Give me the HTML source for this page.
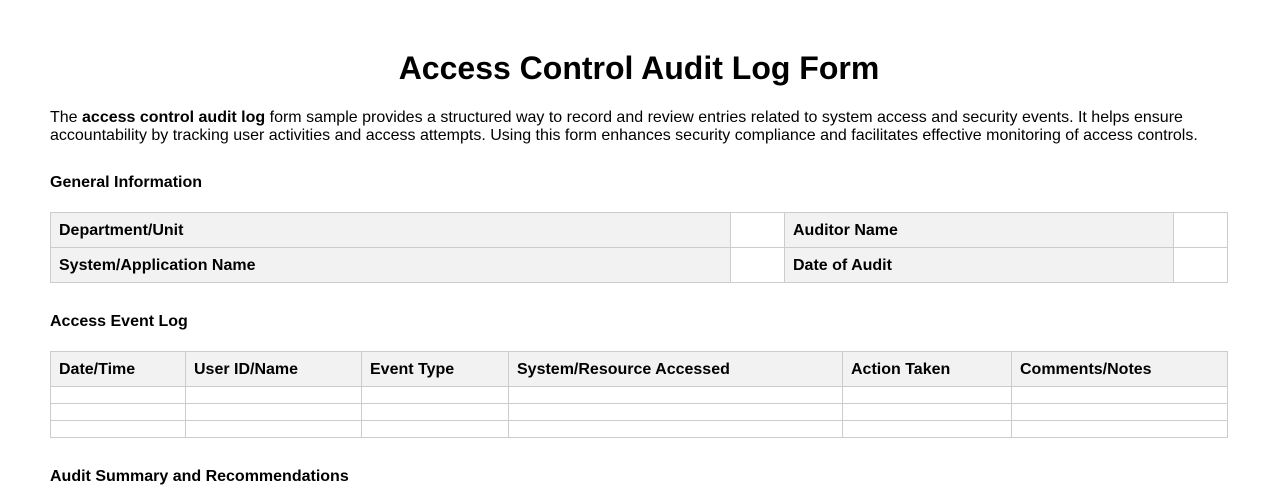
<!DOCTYPE html>
<html><head><meta charset="utf-8"><style>
body{margin:0;width:1278px;height:501px;overflow:hidden;background:#fff;font-family:"Liberation Sans",Arial,sans-serif;color:#000}
h1{position:absolute;top:49px;left:0;width:1278px;text-align:center;font-size:32px;margin:0;font-weight:bold;line-height:38px}
p{position:absolute;top:109px;left:50px;width:1180px;margin:0;font-size:16px;line-height:18px}
h3{position:absolute;left:50px;margin:0;font-size:16px;font-weight:bold;line-height:18px}
table{position:absolute;left:50px;width:1177px;border-collapse:collapse;table-layout:fixed}
td,th{border:1px solid #ccc;font-size:16px;font-weight:bold;text-align:left;padding:2px 8px 0 8px;box-sizing:border-box}
.g{background:#f2f2f2}
#t1 td{height:35px}
#t2 th{height:35px;background:#f2f2f2}
#t2 td{height:17px;padding:0}
</style></head><body>
<h1>Access Control Audit Log Form</h1>
<p>The <b>access control audit log</b> form sample provides a structured way to record and review entries related to system access and security events. It helps ensure accountability by tracking user activities and access attempts. Using this form enhances security compliance and facilitates effective monitoring of access controls.</p>
<h3 style="top:174px">General Information</h3>
<table id="t1" style="top:212px">
<colgroup><col style="width:680px"><col style="width:54px"><col style="width:389px"><col style="width:54px"></colgroup>
<tr><td class="g">Department/Unit</td><td></td><td class="g">Auditor Name</td><td></td></tr>
<tr><td class="g">System/Application Name</td><td></td><td class="g">Date of Audit</td><td></td></tr>
</table>
<h3 style="top:313px">Access Event Log</h3>
<table id="t2" style="top:351px">
<colgroup><col style="width:135px"><col style="width:176px"><col style="width:147px"><col style="width:334px"><col style="width:169px"><col style="width:216px"></colgroup>
<tr><th>Date/Time</th><th>User ID/Name</th><th>Event Type</th><th>System/Resource Accessed</th><th>Action Taken</th><th>Comments/Notes</th></tr>
<tr><td></td><td></td><td></td><td></td><td></td><td></td></tr>
<tr><td></td><td></td><td></td><td></td><td></td><td></td></tr>
<tr><td></td><td></td><td></td><td></td><td></td><td></td></tr>
</table>
<h3 style="top:468px">Audit Summary and Recommendations</h3>
</body></html>
